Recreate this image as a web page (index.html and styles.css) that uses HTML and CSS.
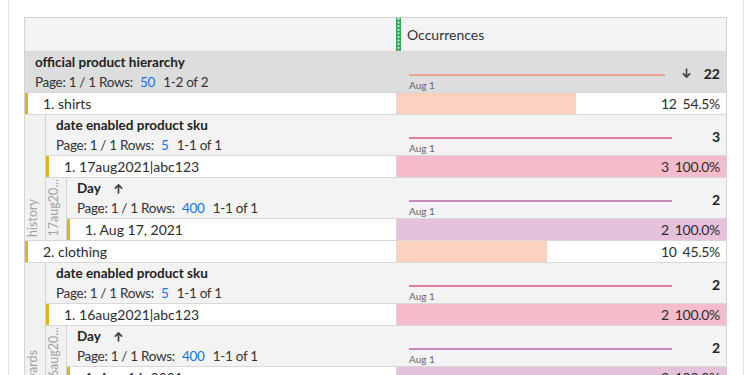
FILE: index.html
```html
<!DOCTYPE html>
<html>
<head>
<meta charset="utf-8">
<link rel="stylesheet" href="styles.css">
</head>
<body>
<div class="panel">
  <div class="table">
    <div class="row head">
      <div class="cell-l"></div>
      <div class="cell-r head-r"><span class="grip"></span><span class="metric">Occurrences</span></div>
    </div>

    <div class="row sec lvl1">
      <div class="cell-l sec-l">
        <div class="sec-title">official product hierarchy</div>
        <div class="pager">Page: 1 / 1 Rows: <span class="link">50</span> 1-2 of 2</div>
      </div>
      <div class="cell-r spark-cell">
        <div class="spark short"><div class="line c-orange"></div><div class="date">Aug 1</div></div>
        <div class="total"><svg class="arrow" viewBox="0 0 10 12" width="9" height="11"><path d="M5 1 V10 M1.5 6.5 L5 10 L8.5 6.5" fill="none" stroke="#444" stroke-width="1.9" stroke-linecap="round" stroke-linejoin="round"/></svg><span class="num">22</span></div>
      </div>
    </div>

    <div class="row item">
      <div class="cell-l item-l">1. shirts</div>
      <div class="cell-r item-r"><div class="bar b-orange" style="width:54.5%"></div><span class="val">12</span><span class="pct">54.5%</span></div>
    </div>

    <div class="group">
      <div class="glabel"><span>history</span></div>
      <div class="gbody">
        <div class="row sec">
          <div class="cell-l sec-l">
            <div class="sec-title">date enabled product sku</div>
            <div class="pager">Page: 1 / 1 Rows: <span class="link">5</span> 1-1 of 1</div>
          </div>
          <div class="cell-r spark-cell">
            <div class="spark"><div class="line c-pink"></div><div class="date">Aug 1</div></div>
            <div class="total"><span class="num">3</span></div>
          </div>
        </div>
        <div class="row item">
          <div class="cell-l item-l">1. 17aug2021|abc123</div>
          <div class="cell-r item-r"><div class="bar b-pink" style="width:100%"></div><span class="val">3</span><span class="pct">100.0%</span></div>
        </div>
        <div class="group">
          <div class="glabel"><span>17aug20...</span></div>
          <div class="gbody">
            <div class="row sec">
              <div class="cell-l sec-l">
                <div class="sec-title">Day <svg class="arrow up" viewBox="0 0 10 12" width="9" height="11"><path d="M5 11 V2 M1.5 5.5 L5 2 L8.5 5.5" fill="none" stroke="#444" stroke-width="1.9" stroke-linecap="round" stroke-linejoin="round"/></svg></div>
                <div class="pager">Page: 1 / 1 Rows: <span class="link">400</span> 1-1 of 1</div>
              </div>
              <div class="cell-r spark-cell">
                <div class="spark"><div class="line c-mauve"></div><div class="date">Aug 1</div></div>
                <div class="total"><span class="num">2</span></div>
              </div>
            </div>
            <div class="row item">
              <div class="cell-l item-l">1. Aug 17, 2021</div>
              <div class="cell-r item-r"><div class="bar b-mauve" style="width:100%"></div><span class="val">2</span><span class="pct">100.0%</span></div>
            </div>
          </div>
        </div>
      </div>
    </div>

    <div class="row item">
      <div class="cell-l item-l">2. clothing</div>
      <div class="cell-r item-r"><div class="bar b-orange" style="width:45.5%"></div><span class="val">10</span><span class="pct">45.5%</span></div>
    </div>

    <div class="group">
      <div class="glabel tail"><span>rewards</span></div>
      <div class="gbody">
        <div class="row sec">
          <div class="cell-l sec-l">
            <div class="sec-title">date enabled product sku</div>
            <div class="pager">Page: 1 / 1 Rows: <span class="link">5</span> 1-1 of 1</div>
          </div>
          <div class="cell-r spark-cell">
            <div class="spark"><div class="line c-pink"></div><div class="date">Aug 1</div></div>
            <div class="total"><span class="num">2</span></div>
          </div>
        </div>
        <div class="row item">
          <div class="cell-l item-l">1. 16aug2021|abc123</div>
          <div class="cell-r item-r"><div class="bar b-pink" style="width:100%"></div><span class="val">2</span><span class="pct">100.0%</span></div>
        </div>
        <div class="group">
          <div class="glabel"><span>16aug20...</span></div>
          <div class="gbody">
            <div class="row sec">
              <div class="cell-l sec-l">
                <div class="sec-title">Day <svg class="arrow up" viewBox="0 0 10 12" width="9" height="11"><path d="M5 11 V2 M1.5 5.5 L5 2 L8.5 5.5" fill="none" stroke="#444" stroke-width="1.9" stroke-linecap="round" stroke-linejoin="round"/></svg></div>
                <div class="pager">Page: 1 / 1 Rows: <span class="link">400</span> 1-1 of 1</div>
              </div>
              <div class="cell-r spark-cell">
                <div class="spark"><div class="line c-mauve"></div><div class="date">Aug 1</div></div>
                <div class="total"><span class="num">2</span></div>
              </div>
            </div>
            <div class="row item">
              <div class="cell-l item-l">1. Aug 16, 2021</div>
              <div class="cell-r item-r"><div class="bar b-mauve" style="width:100%"></div><span class="val">2</span><span class="pct">100.0%</span></div>
            </div>
          </div>
        </div>
      </div>
    </div>
  </div>
</div>
</body>
</html>
```

FILE: styles.css
```css
* { box-sizing: border-box; }
html, body { margin: 0; padding: 0; background: #fff; }
body {
  font-family: "Lato", "Liberation Sans", sans-serif;
  color: #2c2c2c;
  font-size: 13.5px;
  letter-spacing: -0.3px;
  height: 375px;
  overflow: hidden;
}
.panel {
  margin-left: 8px;
  width: 736px;
  height: 375px;
  border-left: 1px solid #e4e4e4;
  border-right: 1px solid #e4e4e4;
  padding: 17px 0 0 15px;
}
.table {
  width: 703px;
  border: 1px solid #d3d3d3;
  border-bottom: none;
  background: #fff;
}
.row {
  display: flex;
  border-bottom: 1px solid #d8d8d8;
}
.cell-l { flex: 1; min-width: 0; }
.cell-r {
  width: 330px;
  flex: none;
  border-left: 1px solid #dadada;
  position: relative;
}
.head { height: 34px; background: #f3f3f3; }
.head-r { display: flex; align-items: center; border-left: none; }
.grip {
  width: 5px;
  align-self: stretch;
  margin-right: 6px;
  background-color: #2fa84f;
  background-image: radial-gradient(circle, rgba(255,255,255,0.85) 0.8px, transparent 1.3px);
  background-position: center 10px;
  background-size: 5px 3.6px;
  background-repeat: repeat-y;
}
.metric { font-size: 14px; color: #333; letter-spacing: 0; }

.sec { height: 41px; background: #f3f3f3; }
.sec.lvl1 { background: #dddddd; }
.sec-l { padding: 0 0 0 10px; }
.sec-title {
  font-weight: 700;
  font-size: 13.5px;
  letter-spacing: 0;
  line-height: 20px;
  color: #222;
  display: flex;
  align-items: center;
}
.sec-title .up { margin-left: 13px; }
.pager { font-size: 13.5px; line-height: 20px; color: #333; }
.link { color: #1473e6; margin: 0 5px 0 4px; }

.spark-cell { display: flex; border-left-color: transparent; }
.spark { padding: 22px 0 0 12px; width: 275px; flex: none; }
.spark.short { width: 268px; }
.line { height: 2px; width: 100%; }
.c-orange { background: #eba38a; }
.c-pink { background: #e0809c; }
.c-mauve { background: #c986b8; }
.date { font-size: 10px; line-height: 12px; margin-top: 3px; color: #666; letter-spacing: 0; }
.total {
  flex: 1;
  display: flex;
  justify-content: flex-end;
  align-items: center;
  height: 18px;
  margin-top: 12px;
  padding-right: 6px;
}
.total .arrow { margin-right: 13px; }
.num { font-weight: 700; font-size: 14px; color: #222; letter-spacing: 0; }

.item { height: 22px; background: #fff; }
.item-l {
  border-left: 3px solid #e0b222;
  padding-left: 15px;
  line-height: 21px;
  white-space: nowrap;
  font-size: 14px;
  letter-spacing: 0;
}
.item-r {
  display: flex;
  justify-content: flex-end;
  align-items: center;
  padding-right: 6px;
  line-height: 21px;
  font-size: 14px;
}
.bar { position: absolute; left: 0; top: 0; bottom: 0; }
.b-orange { background: #fdd1c0; }
.b-pink { background: #f5bdcb; }
.b-mauve { background: #e6c1dc; }
.val, .pct { position: relative; }
.val { margin-right: 6px; }

.group { display: flex; }
.glabel {
  width: 21px;
  flex: none;
  contain: size;
  background: #f1f1f1;
  border-right: 1px solid #d3d3d3;
  border-bottom: 1px solid #d8d8d8;
  display: flex;
  flex-direction: column;
  justify-content: flex-end;
  align-items: center;
  padding-bottom: 3px;
  overflow: hidden;
}
.glabel.tail { padding-bottom: 0; }
.glabel.tail span { margin-bottom: -6px; }
.glabel span {
  writing-mode: vertical-rl;
  transform: rotate(180deg);
  color: #a3a3a3;
  font-size: 12.5px;
  letter-spacing: 0;
  white-space: nowrap;
  line-height: 16px;
  margin-left: -5px;
}
.gbody { flex: 1; min-width: 0; }
```
